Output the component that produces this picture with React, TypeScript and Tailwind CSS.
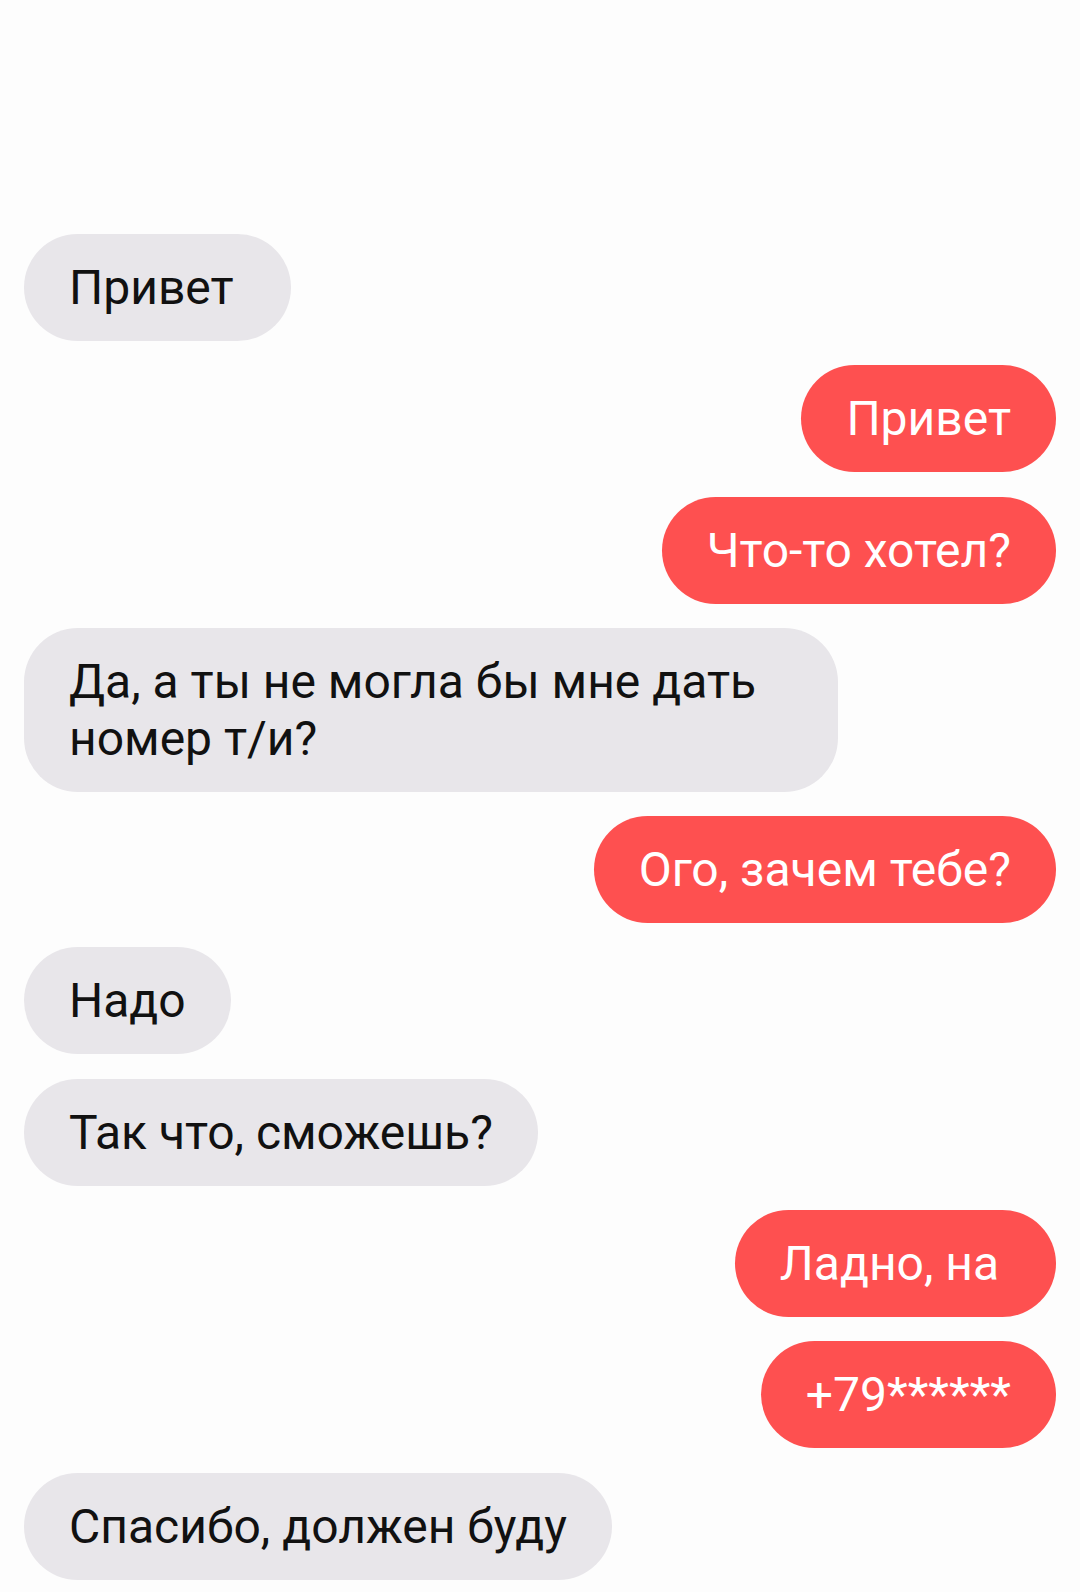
type Message = { text: string; mine: boolean };

// some messages were typed with a trailing space, kept as nbsp so it isn't collapsed
const messages: Message[] = [
  { text: "Привет\u00a0", mine: false },
  { text: "Привет", mine: true },
  { text: "Что-то хотел?", mine: true },
  { text: "Да, а ты не могла бы мне дать номер т/и?", mine: false },
  { text: "Ого, зачем тебе?", mine: true },
  { text: "Надо", mine: false },
  { text: "Так что, сможешь?", mine: false },
  { text: "Ладно, на\u00a0", mine: true },
  { text: "+79******", mine: true },
  { text: "Спасибо, должен буду", mine: false },
];

function Bubble({ text, mine }: Message) {
  return (
    <div
      className={
        mine
          ? "self-end max-w-[814px] rounded-[54px] bg-[#fe5050] px-[45px] py-[25px] text-white"
          : "self-start max-w-[814px] rounded-[54px] bg-[#e8e6ea] px-[45px] py-[25px] text-[#111111]"
      }
    >
      <p className="text-[48px] leading-[57px]">{text}</p>
    </div>
  );
}

export default function App() {
  return (
    <div className="min-h-[1592px] w-[1080px] bg-[#fdfdfd] font-['Roboto',sans-serif]">
      <div className="flex flex-col gap-[24.3px] px-6 pt-[234px]">
        {messages.map((m, i) => (
          <Bubble key={i} text={m.text} mine={m.mine} />
        ))}
      </div>
    </div>
  );
}
